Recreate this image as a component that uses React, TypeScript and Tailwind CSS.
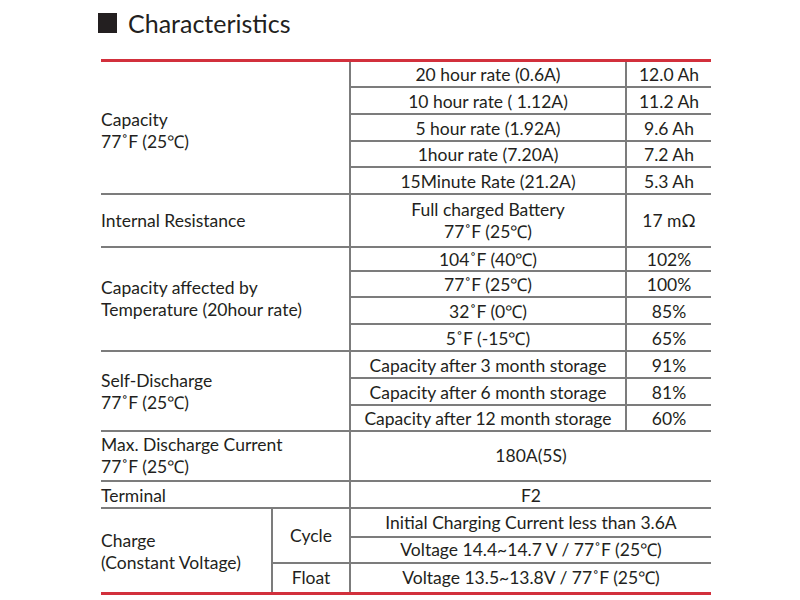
import { Fragment } from "react";

const LINE = "border-[#7c7c7c]";

type Row = { spec: string; value: string };

const CAPACITY: Row[] = [
  { spec: "20 hour rate (0.6A)", value: "12.0 Ah" },
  { spec: "10 hour rate ( 1.12A)", value: "11.2 Ah" },
  { spec: "5 hour rate (1.92A)", value: "9.6 Ah" },
  { spec: "1hour rate (7.20A)", value: "7.2 Ah" },
  { spec: "15Minute Rate (21.2A)", value: "5.3 Ah" },
];

const TEMPERATURE: Row[] = [
  { spec: "104˚F (40℃)", value: "102%" },
  { spec: "77˚F (25℃)", value: "100%" },
  { spec: "32˚F (0℃)", value: "85%" },
  { spec: "5˚F (-15℃)", value: "65%" },
];

const SELF_DISCHARGE: Row[] = [
  { spec: "Capacity after 3 month storage", value: "91%" },
  { spec: "Capacity after 6 month storage", value: "81%" },
  { spec: "Capacity after 12 month storage", value: "60%" },
];

function Label({ className = "", children }: { className?: string; children: React.ReactNode }) {
  return (
    <div className={`flex flex-col justify-center border-b-2 ${LINE} leading-[22px] ${className}`}>
      {children}
    </div>
  );
}

function Cell({ className = "", children }: { className?: string; children: React.ReactNode }) {
  return (
    <div className={`flex flex-col items-center justify-center text-center border-l-2 ${LINE} leading-[22px] ${className}`}>
      {children}
    </div>
  );
}

function SpecRows({ rows }: { rows: Row[] }) {
  return (
    <>
      {rows.map((r) => (
        <Fragment key={r.spec}>
          <Cell className="border-b-2 pt-[2px]">{r.spec}</Cell>
          <Cell className="border-b-2 pt-[2px]">{r.value}</Cell>
        </Fragment>
      ))}
    </>
  );
}

export default function App() {
  return (
    <div
      className="w-[800px] h-[600px] bg-white text-[#231f20] overflow-hidden"
      style={{ fontFamily: "Lato, 'Open Sans', sans-serif" }}
    >
      <div className="flex items-center pl-[98px] h-[46px]">
        <span className="w-[19px] h-[20px] bg-[#231f20] mr-[11px]" />
        <h1 className="text-[25px] leading-none">Characteristics</h1>
      </div>

      <div
        className="ml-[101px] mt-[13px] w-[610px] grid grid-cols-[170px_78px_276px_86px] grid-rows-[26px_27px_27px_26px_27px_53px_24px_26px_27px_27px_27px_27px_26px_50px_27px_29px_26px_28px] border-t-[3px] border-b-[3px] border-[#d2303c] text-[17.5px]"
      >
        <Label className="col-span-2 row-span-5 pt-[6px]">
          <span>Capacity</span>
          <span>77˚F (25℃)</span>
        </Label>
        <SpecRows rows={CAPACITY} />

        <Label className="col-span-2">Internal Resistance</Label>
        <Cell className="border-b-2">
          <span>Full charged Battery</span>
          <span>77˚F (25℃)</span>
        </Cell>
        <Cell className="border-b-2">17 mΩ</Cell>

        <Label className="col-span-2 row-span-4">
          <span>Capacity affected by</span>
          <span>Temperature (20hour rate)</span>
        </Label>
        <SpecRows rows={TEMPERATURE} />

        <Label className="col-span-2 row-span-3 pt-[2px]">
          <span>Self-Discharge</span>
          <span>77˚F (25℃)</span>
        </Label>
        <SpecRows rows={SELF_DISCHARGE} />

        <Label className="col-span-2">
          <span>Max. Discharge Current</span>
          <span>77˚F (25℃)</span>
        </Label>
        <Cell className="col-span-2 border-b-2">180A(5S)</Cell>

        <Label className="col-span-2 pt-[2px]">Terminal</Label>
        <Cell className="col-span-2 border-b-2 pt-[2px]">F2</Cell>

        <div className="row-span-3 flex flex-col justify-center leading-[22px] pt-[2px]">
          <span>Charge</span>
          <span>(Constant Voltage)</span>
        </div>
        <Cell className="row-span-2 border-b-2">Cycle</Cell>
        <Cell className="col-span-2 border-b-2">Initial Charging Current less than 3.6A</Cell>
        <Cell className="col-span-2 border-b-2">Voltage 14.4~14.7 V / 77˚F (25℃)</Cell>
        <Cell>Float</Cell>
        <Cell className="col-span-2">Voltage 13.5~13.8V / 77˚F (25℃)</Cell>
      </div>
    </div>
  );
}
